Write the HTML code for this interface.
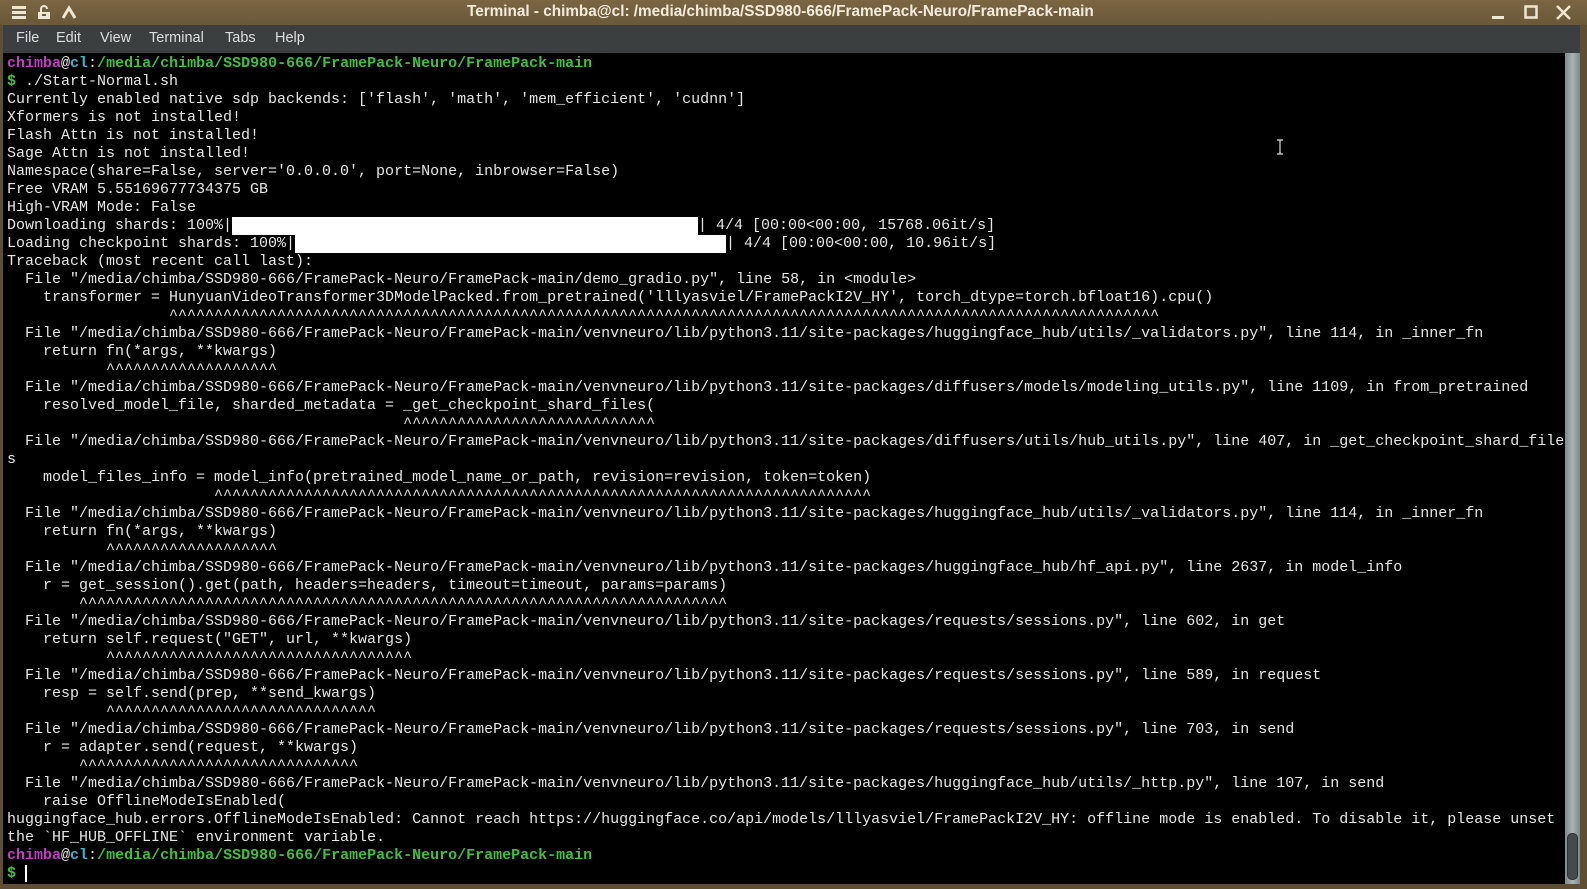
<!DOCTYPE html>
<html><head><meta charset="utf-8"><style>
*{margin:0;padding:0;box-sizing:border-box}
body{width:1587px;height:889px;background:#5e4e33;overflow:hidden;position:relative;font-family:"Liberation Sans",sans-serif}
#title{position:absolute;left:0;top:0;width:1587px;height:25px;background:linear-gradient(#7a6643,#6a5838);}
#title .t{position:absolute;left:467px;top:3px;color:#f3ecdc;font-weight:bold;font-size:15.3px;white-space:nowrap}
#menu{position:absolute;left:3px;top:25px;width:1577px;height:28px;background:#3b3f40;color:#dedede;font-size:14.5px}
#menu span{position:absolute;top:5px}
#term{position:absolute;left:3px;top:53px;width:1562px;height:831px;background:#000;overflow:hidden}
pre{position:absolute;left:4px;top:2px;font-family:"Liberation Mono",monospace;font-size:15px;line-height:18px;color:#e6e6e6;white-space:pre}
.u{color:#c040c0;font-weight:bold}.h{color:#3cb8c8;font-weight:bold}.g{color:#3fc03f;font-weight:bold}
.bar{display:inline-block;background:#fff;height:18px;vertical-align:top}
#sb{position:absolute;left:1565px;top:53px;width:15px;height:831px;background:linear-gradient(90deg,#7d8a8a,#a9b4b3,#7d8888)}
#thumb{position:absolute;left:2px;top:780px;width:11px;height:47px;border-radius:5px;background:#444b4c;border:1px solid #2c3232}
</style></head><body>
<div id="title">
<svg style="position:absolute;left:12px;top:6px" width="14" height="13"><rect y="0" width="14" height="3" fill="#efe7d2"/><rect y="5" width="14" height="3" fill="#efe7d2"/><rect y="10" width="14" height="3" fill="#efe7d2"/></svg>
<svg style="position:absolute;left:37px;top:5px" width="14" height="15"><path d="M4 7V4a3 3 0 0 1 6 0" stroke="#efe7d2" stroke-width="2" fill="none"/><rect x="1" y="7" width="12" height="7" fill="#efe7d2"/><rect x="5" y="9" width="4" height="2" fill="#6a5838"/></svg>
<svg style="position:absolute;left:62px;top:5px" width="14" height="14"><path d="M1 13L7 3l6 10" stroke="#efe7d2" stroke-width="3" fill="none"/></svg>
<div class="t">Terminal - chimba@cl: /media/chimba/SSD980-666/FramePack-Neuro/FramePack-main</div>
<svg style="position:absolute;left:1491px;top:6px" width="14" height="14"><rect x="1" y="10" width="12" height="3" fill="#efe7d2"/></svg>
<svg style="position:absolute;left:1524px;top:5px" width="14" height="14"><rect x="1.5" y="1.5" width="11" height="11" stroke="#efe7d2" stroke-width="2.5" fill="none"/></svg>
<svg style="position:absolute;left:1556px;top:5px" width="15" height="15"><path d="M1 1L14 14M14 1L1 14" stroke="#efe7d2" stroke-width="2.5"/></svg>
</div>
<div id="menu"><span style="left:13px">File</span><span style="left:53px">Edit</span><span style="left:97px">View</span><span style="left:146px">Terminal</span><span style="left:222px">Tabs</span><span style="left:272px">Help</span></div>
<div id="term"><pre><span class="u">chimba</span>@<span class="h">cl</span>:<span class="g">/media/chimba/SSD980-666/FramePack-Neuro/FramePack-main</span>
<span class="g">$</span> ./Start-Normal.sh
Currently enabled native sdp backends: ['flash', 'math', 'mem_efficient', 'cudnn']
Xformers is not installed!
Flash Attn is not installed!
Sage Attn is not installed!
Namespace(share=False, server='0.0.0.0', port=None, inbrowser=False)
Free VRAM 5.55169677734375 GB
High-VRAM Mode: False
Downloading shards: 100%|<span class="bar" style="width:466px"></span>| 4/4 [00:00&lt;00:00, 15768.06it/s]
Loading checkpoint shards: 100%|<span class="bar" style="width:431px"></span>| 4/4 [00:00&lt;00:00, 10.96it/s]
Traceback (most recent call last):
  File "/media/chimba/SSD980-666/FramePack-Neuro/FramePack-main/demo_gradio.py", line 58, in &lt;module&gt;
    transformer = HunyuanVideoTransformer3DModelPacked.from_pretrained('lllyasviel/FramePackI2V_HY', torch_dtype=torch.bfloat16).cpu()
                  ^^^^^^^^^^^^^^^^^^^^^^^^^^^^^^^^^^^^^^^^^^^^^^^^^^^^^^^^^^^^^^^^^^^^^^^^^^^^^^^^^^^^^^^^^^^^^^^^^^^^^^^^^^^^^^
  File "/media/chimba/SSD980-666/FramePack-Neuro/FramePack-main/venvneuro/lib/python3.11/site-packages/huggingface_hub/utils/_validators.py", line 114, in _inner_fn
    return fn(*args, **kwargs)
           ^^^^^^^^^^^^^^^^^^^
  File "/media/chimba/SSD980-666/FramePack-Neuro/FramePack-main/venvneuro/lib/python3.11/site-packages/diffusers/models/modeling_utils.py", line 1109, in from_pretrained
    resolved_model_file, sharded_metadata = _get_checkpoint_shard_files(
                                            ^^^^^^^^^^^^^^^^^^^^^^^^^^^^
  File "/media/chimba/SSD980-666/FramePack-Neuro/FramePack-main/venvneuro/lib/python3.11/site-packages/diffusers/utils/hub_utils.py", line 407, in _get_checkpoint_shard_file
s
    model_files_info = model_info(pretrained_model_name_or_path, revision=revision, token=token)
                       ^^^^^^^^^^^^^^^^^^^^^^^^^^^^^^^^^^^^^^^^^^^^^^^^^^^^^^^^^^^^^^^^^^^^^^^^^
  File "/media/chimba/SSD980-666/FramePack-Neuro/FramePack-main/venvneuro/lib/python3.11/site-packages/huggingface_hub/utils/_validators.py", line 114, in _inner_fn
    return fn(*args, **kwargs)
           ^^^^^^^^^^^^^^^^^^^
  File "/media/chimba/SSD980-666/FramePack-Neuro/FramePack-main/venvneuro/lib/python3.11/site-packages/huggingface_hub/hf_api.py", line 2637, in model_info
    r = get_session().get(path, headers=headers, timeout=timeout, params=params)
        ^^^^^^^^^^^^^^^^^^^^^^^^^^^^^^^^^^^^^^^^^^^^^^^^^^^^^^^^^^^^^^^^^^^^^^^^
  File "/media/chimba/SSD980-666/FramePack-Neuro/FramePack-main/venvneuro/lib/python3.11/site-packages/requests/sessions.py", line 602, in get
    return self.request("GET", url, **kwargs)
           ^^^^^^^^^^^^^^^^^^^^^^^^^^^^^^^^^^
  File "/media/chimba/SSD980-666/FramePack-Neuro/FramePack-main/venvneuro/lib/python3.11/site-packages/requests/sessions.py", line 589, in request
    resp = self.send(prep, **send_kwargs)
           ^^^^^^^^^^^^^^^^^^^^^^^^^^^^^^
  File "/media/chimba/SSD980-666/FramePack-Neuro/FramePack-main/venvneuro/lib/python3.11/site-packages/requests/sessions.py", line 703, in send
    r = adapter.send(request, **kwargs)
        ^^^^^^^^^^^^^^^^^^^^^^^^^^^^^^^
  File "/media/chimba/SSD980-666/FramePack-Neuro/FramePack-main/venvneuro/lib/python3.11/site-packages/huggingface_hub/utils/_http.py", line 107, in send
    raise OfflineModeIsEnabled(
huggingface_hub.errors.OfflineModeIsEnabled: Cannot reach https://huggingface.co/api/models/lllyasviel/FramePackI2V_HY: offline mode is enabled. To disable it, please unset
the `HF_HUB_OFFLINE` environment variable.
<span class="u">chimba</span>@<span class="h">cl</span>:<span class="g">/media/chimba/SSD980-666/FramePack-Neuro/FramePack-main</span>
<span class="g">$</span> <span style="display:inline-block;width:2px;height:17px;background:#fff;vertical-align:top"></span></pre>
<svg style="position:absolute;left:1273px;top:86px" width="8" height="16"><path d="M1 1h6M4 1v14M1 15h6" stroke="#ddd" stroke-width="1.2" fill="none"/></svg>
</div>
<div id="sb"><div id="thumb"></div></div>
</body></html>
